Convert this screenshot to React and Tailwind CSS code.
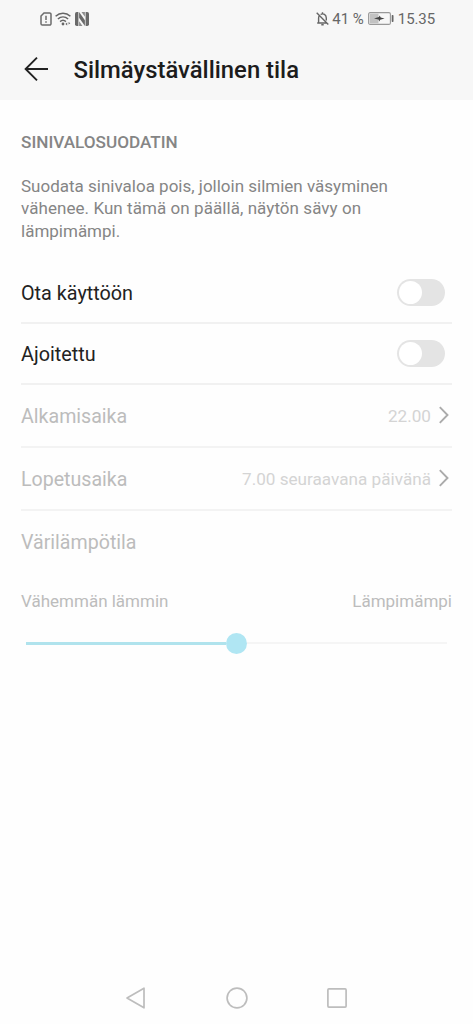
import React, { useState } from "react";

// ------------------- ICONS -------------------
const SimAlertIcon = () => (
  <svg width="12" height="14" viewBox="0 0 12 14" fill="none" stroke="#6c6c6c" strokeWidth="1.500">
    <path d="M4 .9h5.600a1.400 1.400 0 0 1 1.400 1.400v9.400a1.400 1.400 0 0 1-1.400 1.400H2.400A1.400 1.400 0 0 1 1 11.700V4z" />
    <path d="M6 3.700v4.200M6 9.200v1.500" />
  </svg>
);

const WifiIcon = () => (
  <svg width="16" height="14" viewBox="0 0 16 14" fill="none" stroke="#666" strokeWidth="1.500">
    <path d="M.6 4.300C5 .2 11 .2 15.400 4.300M2.900 7c3-2.800 7.200-2.800 10.200 0M5.100 9.600c1.700-1.600 4.100-1.600 5.800 0" />
    <circle cx="8" cy="12" r="1.400" fill="#666" stroke="none" />
    <path d="M10.400 12l1.800-1.500v3zM15.300 11.300l-1.700-1.300v2.600z" fill="#666" stroke="none" />
  </svg>
);

const NfcIcon = () => (
  <svg width="14" height="14" viewBox="0 0 14 14" fill="#6a6a6a">
    <path d="M1.800 0H3.400V14H1.800Q0 14 0 12.200V1.800Q0 0 1.800 0z" />
    <path d="M12.200 14H10.600V0H12.200Q14 0 14 1.800V12.200Q14 14 12.200 14z" />
    <path d="M4.100 0L9.900 8.200V14L4.100 5.800z" />
    <path d="M6.500 0H9.900V4.800zM7.500 14H4.100V9.200z" opacity=".75" />
  </svg>
);

const BellOffIcon = () => (
  <svg width="13" height="14" viewBox="0 0 13 14" fill="none" stroke="#666" strokeWidth="1.400">
    <path d="M.7.800l11.600 11.700M1.200 11h8.900M2.600 10.800V5.900c0-.8.200-1.500.6-2.100M4.600 2.500c2.700-1.600 5.700.3 5.700 3.400v2.700M6.500.2v1.600M5.300 12.800h2.400" />
  </svg>
);

const BatteryIcon = () => (
  <svg width="26" height="13" viewBox="0 0 26 13">
    <rect x=".6" y=".6" width="21.800" height="11.800" rx="1.500" fill="none" stroke="#999" strokeWidth="1.100" />
    <rect x="1.600" y="1.600" width="8.900" height="9.800" fill="#c2c2c2" />
    <path d="M6 6.400l4.900-1.500.8-1.400 1 2.100 3.900.9-4.400 1.300-.9 1.700-.8-2.100z" fill="#444" />
    <rect x="23.700" y="3" width="1.800" height="7" rx=".7" fill="#666" />
  </svg>
);

const BackIcon = () => (
  <svg width="25" height="26" viewBox="0 0 25 26" fill="none" stroke="#222" strokeWidth="1.900">
    <path d="M24 13H1.800M13 1.600L1.600 13 13 24.400" />
  </svg>
);

const ChevronIcon = () => (
  <svg width="10" height="18" viewBox="0 0 10 18" fill="none" stroke="#ababab" strokeWidth="1.900">
    <path d="M.8 1.200L8.500 9 .8 16.800" />
  </svg>
);

// ------------------- ROWS -------------------
const Toggle = ({ checked, onChange, label }) => (
  <button
    role="switch"
    aria-checked={checked}
    aria-label={label}
    onClick={onChange}
    className={`mr-[7.500px] flex h-[27px] w-12 items-center rounded-full px-[2px] ${
      checked ? "justify-end bg-[#5cc8e0]" : "justify-start bg-[#e4e4e4]"
    }`}
  >
    <span className="size-[23px] rounded-full bg-white" />
  </button>
);

const TimeRow = ({ label, value }) => (
  <div className="flex h-[63px] items-center justify-between border-b-2 border-[#f3f3f3]">
    <span className="pt-[2px] text-[19.600px] text-[#bcbcbc]">{label}</span>
    <span className="flex items-center gap-[8px] text-[17.150px] text-[#d4d4d4]">
      <span className="pt-[2px]">{value}</span>
      <span className="mr-[3px]">
        <ChevronIcon />
      </span>
    </span>
  </div>
);

const App = () => {
  const [enabled, setEnabled] = useState(false);
  const [scheduled, setScheduled] = useState(false);

  return (
    <div className="flex h-[1024px] w-[473px] flex-col bg-[#fefefe] font-['Roboto','Liberation_Sans',sans-serif]">
      {/* Header */}
      <header className="h-[100px] bg-[#f7f7f7]">
        <div className="flex h-[38px] items-center justify-between pr-[38px] pl-[40px] text-[15px] text-[#666]">
          <div className="flex items-center gap-[3px] pb-[1px]">
            <SimAlertIcon />
            <WifiIcon />
            <span className="ml-[1px]">
              <NfcIcon />
            </span>
          </div>
          <div className="flex items-center">
            <span className="pb-[1px]">
              <BellOffIcon />
            </span>
            <span className="ml-[3px]">41 %</span>
            <span className="mr-[4px] ml-[4px] pb-[1px]">
              <BatteryIcon />
            </span>
            <span className="tracking-[-0.100px]">15.35</span>
          </div>
        </div>
        <div className="flex h-[62px] items-center gap-[24.500px] pl-[24px]">
          <BackIcon />
          <h1 className="pt-[3px] text-[23.850px] font-medium text-[#1c1c1c]">
            Silmäystävällinen tila
          </h1>
        </div>
      </header>

      <main className="flex-1 px-[21px]">
        {/* Blue light filter */}
        <h2 className="pt-[31px] text-[17.150px] leading-[22px] font-medium text-[#858585]">
          SINIVALOSUODATIN
        </h2>
        <p className="pt-[22px] text-[17px] leading-[22.300px] text-[#858585]">
          Suodata sinivaloa pois, jolloin silmien väsyminen
          <br />
          <span className="tracking-[0.060px]">vähenee. Kun tämä on päällä, näytön sävy on</span>
          <br />
          lämpimämpi.
        </p>

        <div className="mt-[21px] flex h-[61px] items-center justify-between border-b-2 border-[#f1f1f1] text-[19.800px] text-[#222]">
          <span className="pt-[2px]">Ota käyttöön</span>
          <Toggle label="Ota käyttöön" checked={enabled} onChange={() => setEnabled(!enabled)} />
        </div>
        <div className="flex h-[61px] items-center justify-between border-b-2 border-[#f1f1f1] text-[19.800px] text-[#222]">
          <span className="pt-[2px]">Ajoitettu</span>
          <Toggle label="Ajoitettu" checked={scheduled} onChange={() => setScheduled(!scheduled)} />
        </div>
        <TimeRow label="Alkamisaika" value="22.00" />
        <TimeRow label="Lopetusaika" value="7.00 seuraavana päivänä" />

        {/* Color temperature */}
        <div className="flex h-[63px] items-center pt-[1px] text-[19.600px] text-[#bcbcbc]">
          Värilämpötila
        </div>
        <div className="mt-[15px] flex justify-between text-[17px] leading-[24px] text-[#bcbcbc]">
          <span>Vähemmän lämmin</span>
          <span>Lämpimämpi</span>
        </div>
        <div className="mt-[20px] flex items-center px-[5px]">
          <div className="h-[3px] w-[200px] bg-[#b0e3ed]" />
          <div className="size-[21px] rounded-full bg-[#b0e6f3]" />
          <div className="h-[2px] flex-1 bg-[#f5f5f5]" />
        </div>
      </main>

      {/* Navigation bar */}
      <nav className="flex h-[52px] items-center justify-center gap-[78.500px]">
        <svg width="22" height="24" viewBox="0 0 22 24" fill="none" stroke="#bdbdbd" strokeWidth="1.700" strokeLinejoin="round">
          <path d="M19 2.200v19.600L2 12z" />
        </svg>
        <svg width="22" height="22" viewBox="0 0 22 22" fill="none" stroke="#bdbdbd" strokeWidth="1.700">
          <circle cx="11" cy="11" r="9.900" />
        </svg>
        <svg width="22" height="22" viewBox="0 0 22 22" fill="none" stroke="#bdbdbd" strokeWidth="1.700">
          <rect x="1.900" y="1.900" width="18.200" height="18.200" rx="1" />
        </svg>
      </nav>
    </div>
  );
};

export default App;
